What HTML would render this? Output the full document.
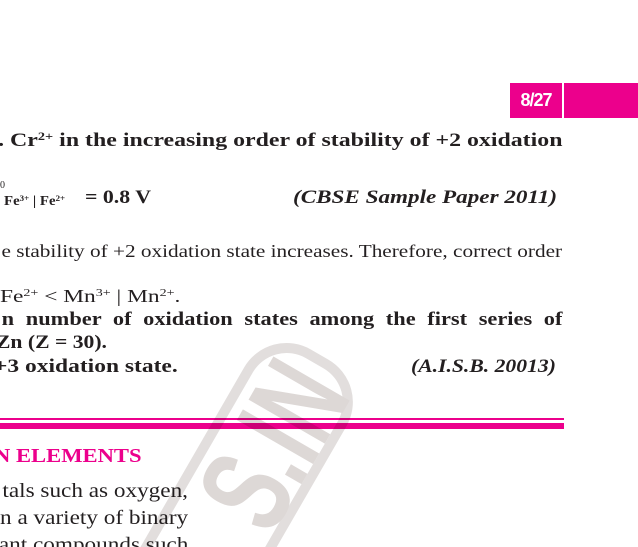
<!DOCTYPE html>
<html><head><meta charset="utf-8"><style>
html,body{margin:0;padding:0;background:#fff;width:638px;height:547px;overflow:hidden;position:relative;font-family:"Liberation Serif",serif;color:#231f20}
.l{position:absolute;white-space:nowrap;line-height:1.2}
.r{right:76px;text-align:right;transform-origin:right center}
.lf{transform-origin:left center}
.b{font-weight:bold}
sup{font-size:60%;vertical-align:0;position:relative;top:-0.55em;line-height:0}
</style></head><body>
<div style="position:absolute;left:510px;top:83px;width:52px;height:35px;background:#ec008c;color:#fff;font:bold 18px 'Liberation Sans',sans-serif;letter-spacing:-1px;line-height:35px;text-align:center">8/27</div>
<div style="position:absolute;left:564px;top:83px;width:74px;height:35px;background:#ec008c"></div>

<div class="l r b" style="top:130px;font-size:18.5px;transform:scaleX(1.29)">. Cr<sup>2+</sup> in the increasing order of stability of +2 oxidation</div>
<div class="l" style="left:0;top:180px;font-size:10px">0</div>
<div class="l b lf" style="left:4px;top:193px;font-size:13.5px;transform:scaleX(1.1)">Fe<sup>3+</sup> | Fe<sup>2+</sup></div>
<div class="l b lf" style="left:85px;top:187px;font-size:18.5px;transform:scaleX(1.18)">= 0.8 V</div>
<div class="l b lf" style="left:293px;top:187px;font-size:18.5px;font-style:italic;transform:scaleX(1.25)">(CBSE Sample Paper 2011)</div>

<div class="l r" style="top:241px;font-size:18px;transform:scaleX(1.18)">e stability of +2 oxidation state increases. Therefore, correct order</div>
<div class="l lf" style="left:0;top:286px;font-size:18px;transform:scaleX(1.3)">Fe<sup>2+</sup> &lt; Mn<sup>3+</sup> | Mn<sup>2+</sup>.</div>
<div class="l r b" style="top:309px;font-size:18.5px;word-spacing:5px;transform:scaleX(1.21)">n number of oxidation states among the first series of</div>
<div class="l b lf" style="left:-4px;top:332px;font-size:18.5px;transform:scaleX(1.17)">Zn (Z = 30).</div>
<div class="l b lf" style="left:-6px;top:356px;font-size:18.5px;transform:scaleX(1.27)">+3 oxidation state.</div>
<div class="l b lf" style="left:411px;top:356px;font-size:18.5px;font-style:italic;transform:scaleX(1.17)">(A.I.S.B. 20013)</div>

<div style="position:absolute;left:0;top:418px;width:564px;height:2px;background:#ec008c"></div>
<div style="position:absolute;left:0;top:423px;width:564px;height:6px;background:#ec008c"></div>

<div class="l b lf" style="left:-6px;top:444px;font-size:20px;color:#ec008c;transform:scaleX(1.13)">N ELEMENTS</div>
<div class="l r" style="right:450px;top:479px;font-size:20px;transform:scaleX(1.16)">tals such as oxygen,</div>
<div class="l r" style="right:450px;top:506px;font-size:20px;transform:scaleX(1.16)">n a variety of binary</div>
<div class="l r" style="right:450px;top:533px;font-size:20px;transform:scaleX(1.16)">ant compounds such</div>

<svg width="638" height="547" style="position:absolute;left:0;top:0;mix-blend-mode:multiply">
<g transform="translate(275,450) rotate(-60)" fill="#ddd8d6">
<rect x="-260" y="-63" width="360" height="108" rx="44" fill="none" stroke="#e2dedd" stroke-width="10"/>
<text transform="scale(0.66,1)" x="130" y="40" text-anchor="end" font-family="Liberation Sans,sans-serif" font-weight="bold" font-size="128">S.IN</text>
</g>
</svg>
</body></html>
